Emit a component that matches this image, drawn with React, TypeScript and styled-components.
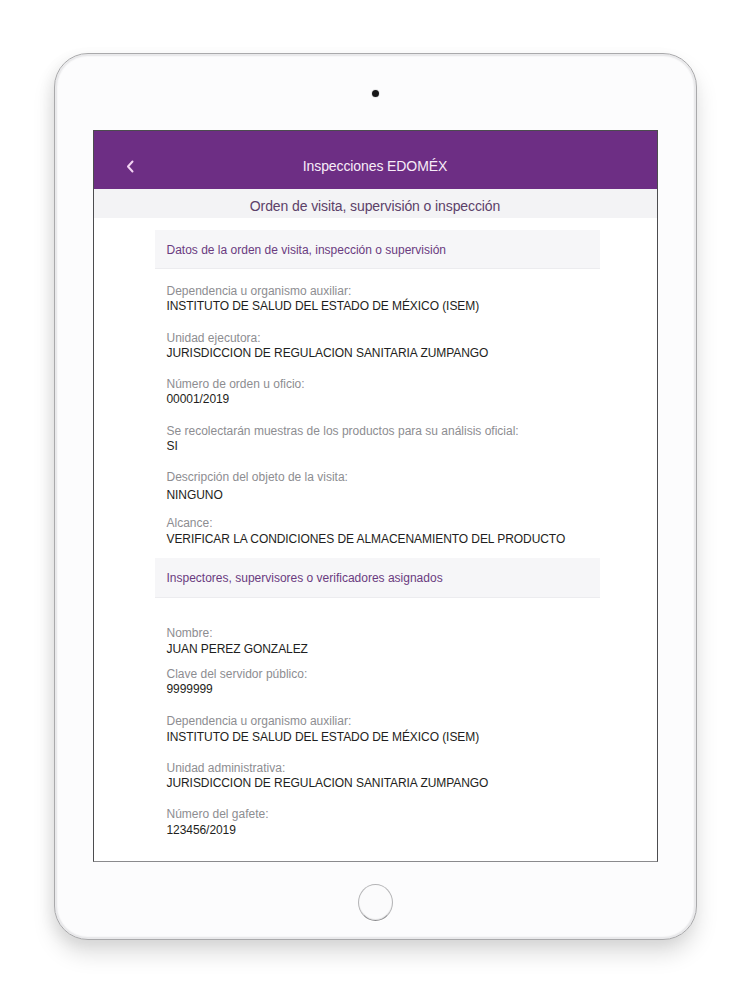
import React from 'react';
import styled, { createGlobalStyle } from 'styled-components';

const GlobalStyle = createGlobalStyle`
  html, body {
    margin: 0;
    padding: 0;
    background: #ffffff;
  }
  body {
    font-family: 'Liberation Sans', Arial, Helvetica, sans-serif;
    -webkit-font-smoothing: antialiased;
  }
`;

const Page = styled.div`
  width: 750px;
  height: 1000px;
  padding-top: 53px;
  box-sizing: border-box;
  display: flex;
  flex-direction: column;
  align-items: center;
`;

const Device = styled.div`
  width: 643px;
  height: 887px;
  box-sizing: border-box;
  border-radius: 34px;
  background: #fcfcfd;
  border: 1.5px solid #a9a9ab;
  box-shadow: inset 0 0 0 2px #e9e9eb, inset 0 0 0 3px #f7f7f8,
    0 14px 22px rgba(0, 0, 0, 0.13), -4px 4px 14px rgba(0, 0, 0, 0.06);
  display: flex;
  flex-direction: column;
  align-items: center;
`;

const Camera = styled.div`
  width: 7px;
  height: 7px;
  border-radius: 50%;
  background: #161618;
  margin-top: 36px;
  box-shadow: 0 0 0 1px rgba(0, 0, 0, 0.08);
`;

const Screen = styled.div`
  width: 565px;
  height: 732px;
  margin-top: 33px;
  box-sizing: border-box;
  border: 1.5px solid #4c4c4f;
  border-bottom-color: #8a8a8d;
  background: #ffffff;
  display: flex;
  flex-direction: column;
  overflow: hidden;
`;

const HomeButton = styled.div`
  width: 35px;
  height: 37px;
  margin-top: 22px;
  box-sizing: border-box;
  border-radius: 50%;
  border: 1.5px solid #b4b4b6;
  border-bottom-color: #8d8d90;
  box-shadow: inset 0 -1px 1px rgba(0, 0, 0, 0.1), 0 1px 0 #ffffff;
  background: #fbfbfc;
`;

const NavBar = styled.header`
  height: 58px;
  flex-shrink: 0;
  background: #6d2e84;
  display: flex;
  align-items: center;
  justify-content: center;
  position: relative;
  padding-top: 12px;
  box-sizing: border-box;
`;

const NavTitle = styled.h1`
  margin: 0;
  font-size: 14px;
  font-weight: 400;
  color: #f7ecf8;
  letter-spacing: -0.1px;
`;

const BackButton = styled.span`
  position: absolute;
  left: 32px;
  top: 29px;
  display: flex;
`;

const SubBar = styled.div`
  height: 29px;
  flex-shrink: 0;
  background: #f3f3f5;
  display: flex;
  align-items: center;
  justify-content: center;
  padding-top: 4px;
  box-sizing: border-box;
  font-size: 14px;
  color: #5c4169;
  letter-spacing: -0.1px;
`;

const Content = styled.div`
  width: 445px;
  margin-left: 61px;
  padding-top: 12px;
  display: flex;
  flex-direction: column;
`;

const SectionHeader = styled.div<{ $h: number; $after: number }>`
  height: ${p => p.$h}px;
  margin-bottom: ${p => p.$after}px;
  background: #f6f6f8;
  box-shadow: 0 1px 0 #ececef;
  display: flex;
  align-items: center;
  padding-left: 12px;
  padding-top: 1px;
  box-sizing: border-box;
  font-size: 12px;
  color: #6a3b80;
`;

const Field = styled.div<{ $after: number }>`
  display: flex;
  flex-direction: column;
  padding-left: 12px;
  margin-bottom: ${p => p.$after}px;
`;

const Label = styled.span`
  font-size: 12px;
  line-height: 14px;
  color: #8d8d91;
`;

const Value = styled.span<{ $gap: number }>`
  font-size: 12px;
  line-height: 14px;
  color: #1e1e20;
  letter-spacing: -0.07px;
  margin-top: ${p => p.$gap}px;
`;

type Item = { label: string; value: string; gap: number; after: number };

const orden: Item[] = [
  { label: 'Dependencia u organismo auxiliar:', value: 'INSTITUTO DE SALUD DEL ESTADO DE MÉXICO (ISEM)', gap: 1, after: 17.5 },
  { label: 'Unidad ejecutora:', value: 'JURISDICCION DE REGULACION SANITARIA ZUMPANGO', gap: 1, after: 17.5 },
  { label: 'Número de orden u oficio:', value: '00001/2019', gap: 1, after: 17.5 },
  { label: 'Se recolectarán muestras de los productos para su análisis oficial:', value: 'SI', gap: 1, after: 17.5 },
  { label: 'Descripción del objeto de la visita:', value: 'NINGUNO', gap: 4, after: 14 },
  { label: 'Alcance:', value: 'VERIFICAR LA CONDICIONES DE ALMACENAMIENTO DEL PRODUCTO', gap: 2, after: 12 },
];

const inspectores: Item[] = [
  { label: 'Nombre:', value: 'JUAN PEREZ GONZALEZ', gap: 2, after: 11 },
  { label: 'Clave del servidor público:', value: '9999999', gap: 1, after: 18 },
  { label: 'Dependencia u organismo auxiliar:', value: 'INSTITUTO DE SALUD DEL ESTADO DE MÉXICO (ISEM)', gap: 2, after: 17 },
  { label: 'Unidad administrativa:', value: 'JURISDICCION DE REGULACION SANITARIA ZUMPANGO', gap: 1, after: 17 },
  { label: 'Número del gafete:', value: '123456/2019', gap: 2, after: 0 },
];

const Fields = ({ items }: { items: Item[] }) => (
  <>
    {items.map(it => (
      <Field key={it.label + it.value} $after={it.after}>
        <Label>{it.label}</Label>
        <Value $gap={it.gap}>{it.value}</Value>
      </Field>
    ))}
  </>
);

const Chevron = () => (
  <svg width="9" height="13" viewBox="0 0 9 13">
    <polyline
      points="6.5,1.5 2,6.5 6.5,11.5"
      fill="none"
      stroke="#f3d3f3"
      strokeWidth="2"
      strokeLinecap="round"
      strokeLinejoin="round"
    />
  </svg>
);

export default function App() {
  return (
    <>
      <GlobalStyle />
      <Page>
        <Device>
          <Camera />
          <Screen>
            <NavBar>
              <BackButton>
                <Chevron />
              </BackButton>
              <NavTitle>Inspecciones EDOMÉX</NavTitle>
            </NavBar>
            <SubBar>Orden de visita, supervisión o inspección</SubBar>
            <Content>
              <SectionHeader $h={38} $after={16}>
                Datos de la orden de visita, inspección o supervisión
              </SectionHeader>
              <Fields items={orden} />
              <SectionHeader $h={39} $after={29}>
                Inspectores, supervisores o verificadores asignados
              </SectionHeader>
              <Fields items={inspectores} />
            </Content>
          </Screen>
          <HomeButton />
        </Device>
      </Page>
    </>
  );
}
